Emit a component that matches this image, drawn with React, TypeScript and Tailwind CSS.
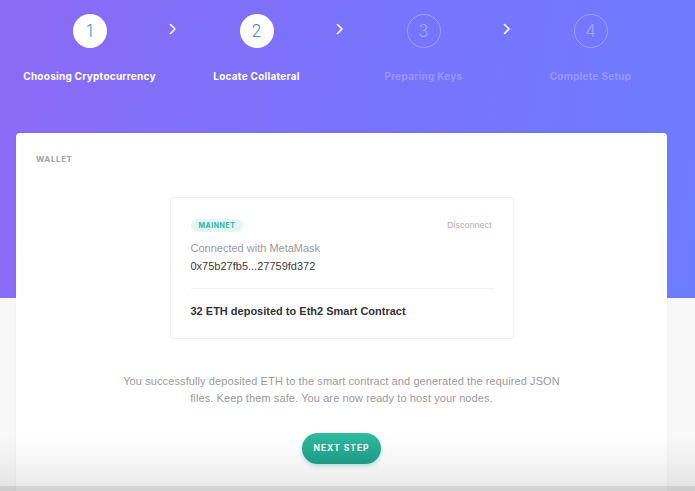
import React from "react";

const steps = [
  { n: "1", label: "Choosing Cryptocurrency", active: true, color: "text-[#4aa3cf]" },
  { n: "2", label: "Locate Collateral", active: true, color: "text-[#4a8fc8]" },
  { n: "3", label: "Preparing Keys", active: false, color: "" },
  { n: "4", label: "Complete Setup", active: false, color: "" },
];

function Chevron() {
  return (
    <svg width="8" height="12" viewBox="0 0 8 12" fill="none">
      <path d="M1.5 1.5L6 6L1.5 10.5" stroke="white" strokeWidth="1.6" strokeLinecap="round" strokeLinejoin="round" />
    </svg>
  );
}

export default function App() {
  return (
    <div className="relative w-full h-[491px] overflow-hidden bg-[linear-gradient(180deg,transparent_298px,#f8f8f9_298px),linear-gradient(100deg,#8b6af5_0%,#7a73fb_45%,#6c7dff_100%)] font-['Liberation_Sans',Arial,sans-serif]">
      {/* Steps */}
      <div className="flex pl-[16px] pt-[14px]">
        {steps.map((s, i) => (
          <React.Fragment key={s.n}>
            <div className="w-[147px] flex flex-col items-center">
              <div
                className={
                  s.active
                    ? "w-[34px] h-[34px] rounded-full bg-white flex items-center justify-center"
                    : "w-[34px] h-[34px] rounded-full border-[1.5px] border-white/30 flex items-center justify-center"
                }
              >
                <span
                  className={
                    "text-[17px] font-light leading-none font-['Inter',sans-serif] " +
                    (s.active ? s.color : "text-white/35")
                  }
                >
                  {s.n}
                </span>
              </div>
              <div
                className={
                  "mt-[22px] text-[10px] font-bold leading-[12px] whitespace-nowrap font-['Inter',sans-serif] tracking-[0.25px] " +
                  (s.active ? "text-white" : "text-white/25")
                }
              >
                {s.label}
              </div>
            </div>
            {i < 3 && (
              <div className="w-[20px] h-[34px] flex items-center justify-center -mt-[2px]">
                <Chevron />
              </div>
            )}
          </React.Fragment>
        ))}
      </div>

      {/* Main card */}
      <div className="mx-[16px] w-[651px] mt-[51px] h-[380px] bg-white rounded-t-[4px] shadow-[0_0_3px_rgba(0,0,0,0.05)] px-[20px] pt-[22px]">
        <div className="text-[8px] font-bold tracking-[0.6px] text-[#a3a3a8] leading-[8px] font-['Inter',sans-serif]">
          WALLET
        </div>

        <div className="mx-auto mt-[34px] w-[344px] h-[142px] border border-[#efeff1] rounded-[3px] px-[20px] pt-[21px]">
          <div className="flex items-center justify-between">
            <div className="h-[13px] px-[8px] rounded-full bg-[#e3f6f4] flex items-center">
              <span className="text-[7px] font-bold tracking-[0.5px] text-[#35b3a3] font-['Inter',sans-serif]">
                MAINNET
              </span>
            </div>
            <span className="text-[9px] text-[#b0b0b4] pr-[1px]">Disconnect</span>
          </div>
          <div className="mt-[7px] text-[11px] leading-[17px] text-[#9a9a9e]">Connected with MetaMask</div>
          <div className="mt-[1px] text-[11px] leading-[17px] text-[#3d3d42]">0x75b27fb5...27759fd372</div>
          <div className="mt-[13px] h-px bg-[#f1f1f3] mr-[-2px]" />
          <div className="mt-[15px] text-[11px] leading-[14px] font-bold text-[#333338]">
            32 ETH deposited to Eth2 Smart Contract
          </div>
        </div>

        <p className="mx-auto mt-[34px] w-[456px] text-center text-[11px] leading-[17px] tracking-[0.1px] text-[#9a9a9e]">
          You successfully deposited ETH to the smart contract and generated the required JSON files. Keep them safe. You are now ready to host your nodes.
        </p>

        <div className="flex justify-center mt-[26px]">
          <button className="w-[79px] h-[31px] rounded-full bg-[linear-gradient(180deg,#2fbb9d,#1f9f8b)] shadow-[0_2px_4px_rgba(31,159,139,0.3)] flex items-center justify-center">
            <span className="text-[8.5px] font-bold tracking-[1px] text-white font-['Inter',sans-serif]">NEXT STEP</span>
          </button>
        </div>
      </div>

      {/* Bottom fade overlay */}
      <div className="pointer-events-none absolute left-0 right-0 bottom-0 h-[55px] bg-[linear-gradient(180deg,rgba(0,0,0,0)_0%,rgba(0,0,0,0.04)_50%,rgba(0,0,0,0.08)_90%,rgba(0,0,0,0.16)_92%,rgba(0,0,0,0.18)_100%)]" />
    </div>
  );
}
